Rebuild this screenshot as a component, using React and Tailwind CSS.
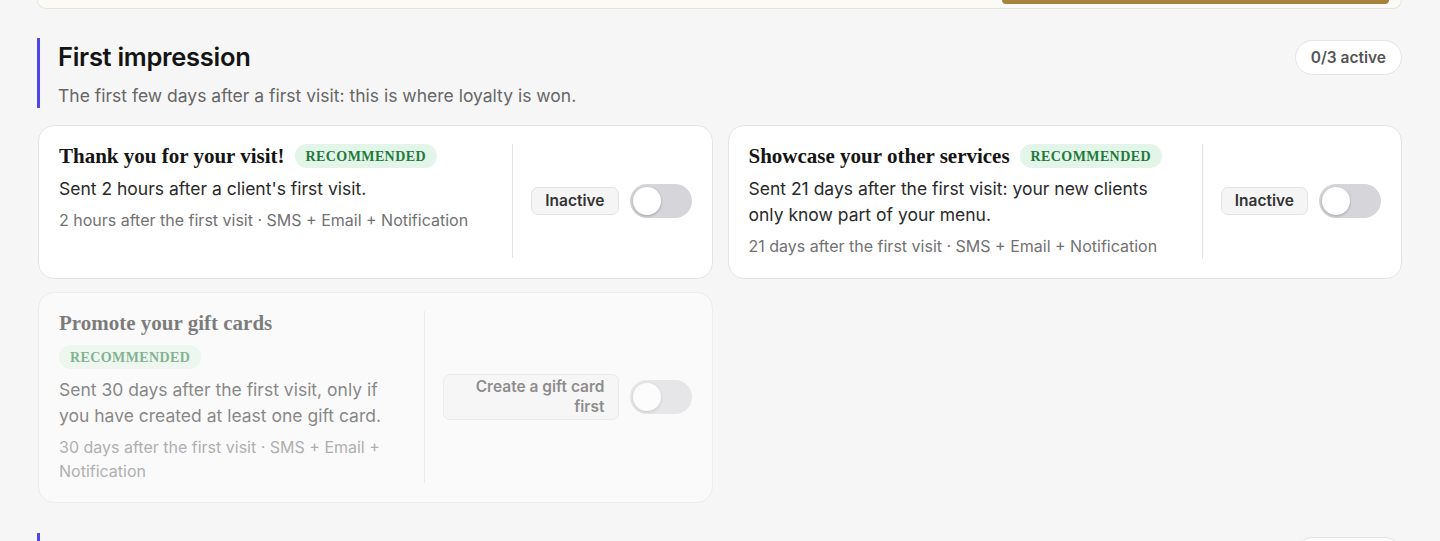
const sans = { fontFamily: 'Inter, "Noto Sans", sans-serif' }
const serif = { fontFamily: '"Liberation Serif", "DejaVu Serif", serif' }

const automations = [
  {
    title: 'Thank you for your visit!',
    description: "Sent 2 hours after a client's first visit.",
    meta: '2 hours after the first visit · SMS + Email + Notification',
    status: 'Inactive',
  },
  {
    title: 'Showcase your other services',
    description:
      'Sent 21 days after the first visit: your new clients only know part of your menu.',
    meta: '21 days after the first visit · SMS + Email + Notification',
    status: 'Inactive',
  },
  {
    title: 'Promote your gift cards',
    description:
      'Sent 30 days after the first visit, only if you have created at least one gift card.',
    meta: '30 days after the first visit · SMS + Email + Notification',
    status: 'Create a gift card first',
    disabled: true,
  },
]

function Toggle() {
  return (
    <div className="flex h-[34px] w-[62px] shrink-0 items-center rounded-full bg-[#d6d6da] px-[3px]">
      <div className="h-[28px] w-[28px] rounded-full bg-white shadow-[0_1px_3px_rgba(0,0,0,0.25)]" />
    </div>
  )
}

function AutomationCard({ title, description, meta, status, disabled }) {
  return (
    <div
      className={
        disabled
          ? 'flex rounded-2xl border border-[#ececec] bg-[#fafafa] pt-[18px] pb-[19px] pl-5 pr-5'
          : 'flex rounded-2xl border border-[#e4e4e4] bg-white pt-[18px] pb-[20px] pl-5 pr-5'
      }
    >
      <div className={disabled ? 'flex flex-1 opacity-55' : 'flex flex-1'}>
        <div className="min-w-0 flex-1 pr-[19px]">
          <div className="flex flex-wrap items-center gap-x-[10px] gap-y-[10px]">
            <h3
              className="text-[21px] font-bold leading-6 text-[#151515]"
              style={serif}
            >
              {title}
            </h3>
            <span
              className="flex h-6 items-center rounded-full bg-[#e3f5e8] px-[11px] text-[14px] font-bold tracking-[0.4px] text-[#1f7a3c]"
              style={serif}
            >
              RECOMMENDED
            </span>
          </div>
          <p className="mt-2 text-[17.5px] leading-[26px] text-[#2a2a2a]">
            {description}
          </p>
          <p className="mt-[6px] text-[16px] leading-6 text-[#727272]">{meta}</p>
        </div>
        <div className="flex items-center gap-[11px] border-l border-[#e2e2e2] pl-[18px]">
          <span
            className={
              disabled
                ? 'w-[176px] rounded-[7px] border border-[#dedede] bg-[#f3f3f3] px-[13px] py-[2px] text-right text-[15.5px] font-semibold leading-5 text-[#333]'
                : 'rounded-[7px] border border-[#e2e2e2] bg-[#f5f5f5] px-[13px] py-[3px] text-[15.5px] font-semibold leading-5 text-[#333]'
            }
          >
            {status}
          </span>
          <Toggle />
        </div>
      </div>
    </div>
  )
}

function SectionHeader({ title, subtitle, count }) {
  return (
    <div className="flex items-start justify-between">
      <div className="border-l-[3px] border-[#4f46e5] pl-[18px] pt-[3px]">
        <h2 className="text-[25.5px] font-semibold leading-8 tracking-[-0.3px] text-[#141414]">
          {title}
        </h2>
        <p className="mt-[11px] text-[17.5px] leading-6 text-[#666]">{subtitle}</p>
      </div>
      <span className="mt-[2px] rounded-full border border-[#e4e4e4] bg-white px-[15px] py-[6px] text-[15.5px] font-semibold leading-[21px] text-[#555]">
        {count}
      </span>
    </div>
  )
}

export default function App() {
  return (
    <div className="min-h-screen bg-[#f6f6f6] pl-[37px] pr-[38px]" style={sans}>
      <div className="flex h-[9px] items-start justify-end rounded-b-2xl border border-t-0 border-[#e6e4de] bg-[#fbfaf7] pr-[12px]">
        <div className="h-[4px] w-[387px] rounded-b-[10px] bg-[#a9823f]" />
      </div>

      <section className="mt-[29px]">
        <SectionHeader
          title="First impression"
          subtitle="The first few days after a first visit: this is where loyalty is won."
          count="0/3 active"
        />
        <div className="mt-[17px] grid grid-cols-2 gap-x-[15px] gap-y-[13px] pl-px">
          {automations.map((item) => (
            <AutomationCard key={item.title} {...item} />
          ))}
        </div>
      </section>

      {/* next section, only its top edge is in view */}
      <section className="mt-[30px] flex items-start justify-between pb-10">
        <div className="h-[60px] border-l-[3px] border-[#4f46e5]" />
        <div className="mt-[4px] h-[36px] w-[107px] rounded-full border border-[#e4e4e4] bg-white" />
      </section>
    </div>
  )
}
